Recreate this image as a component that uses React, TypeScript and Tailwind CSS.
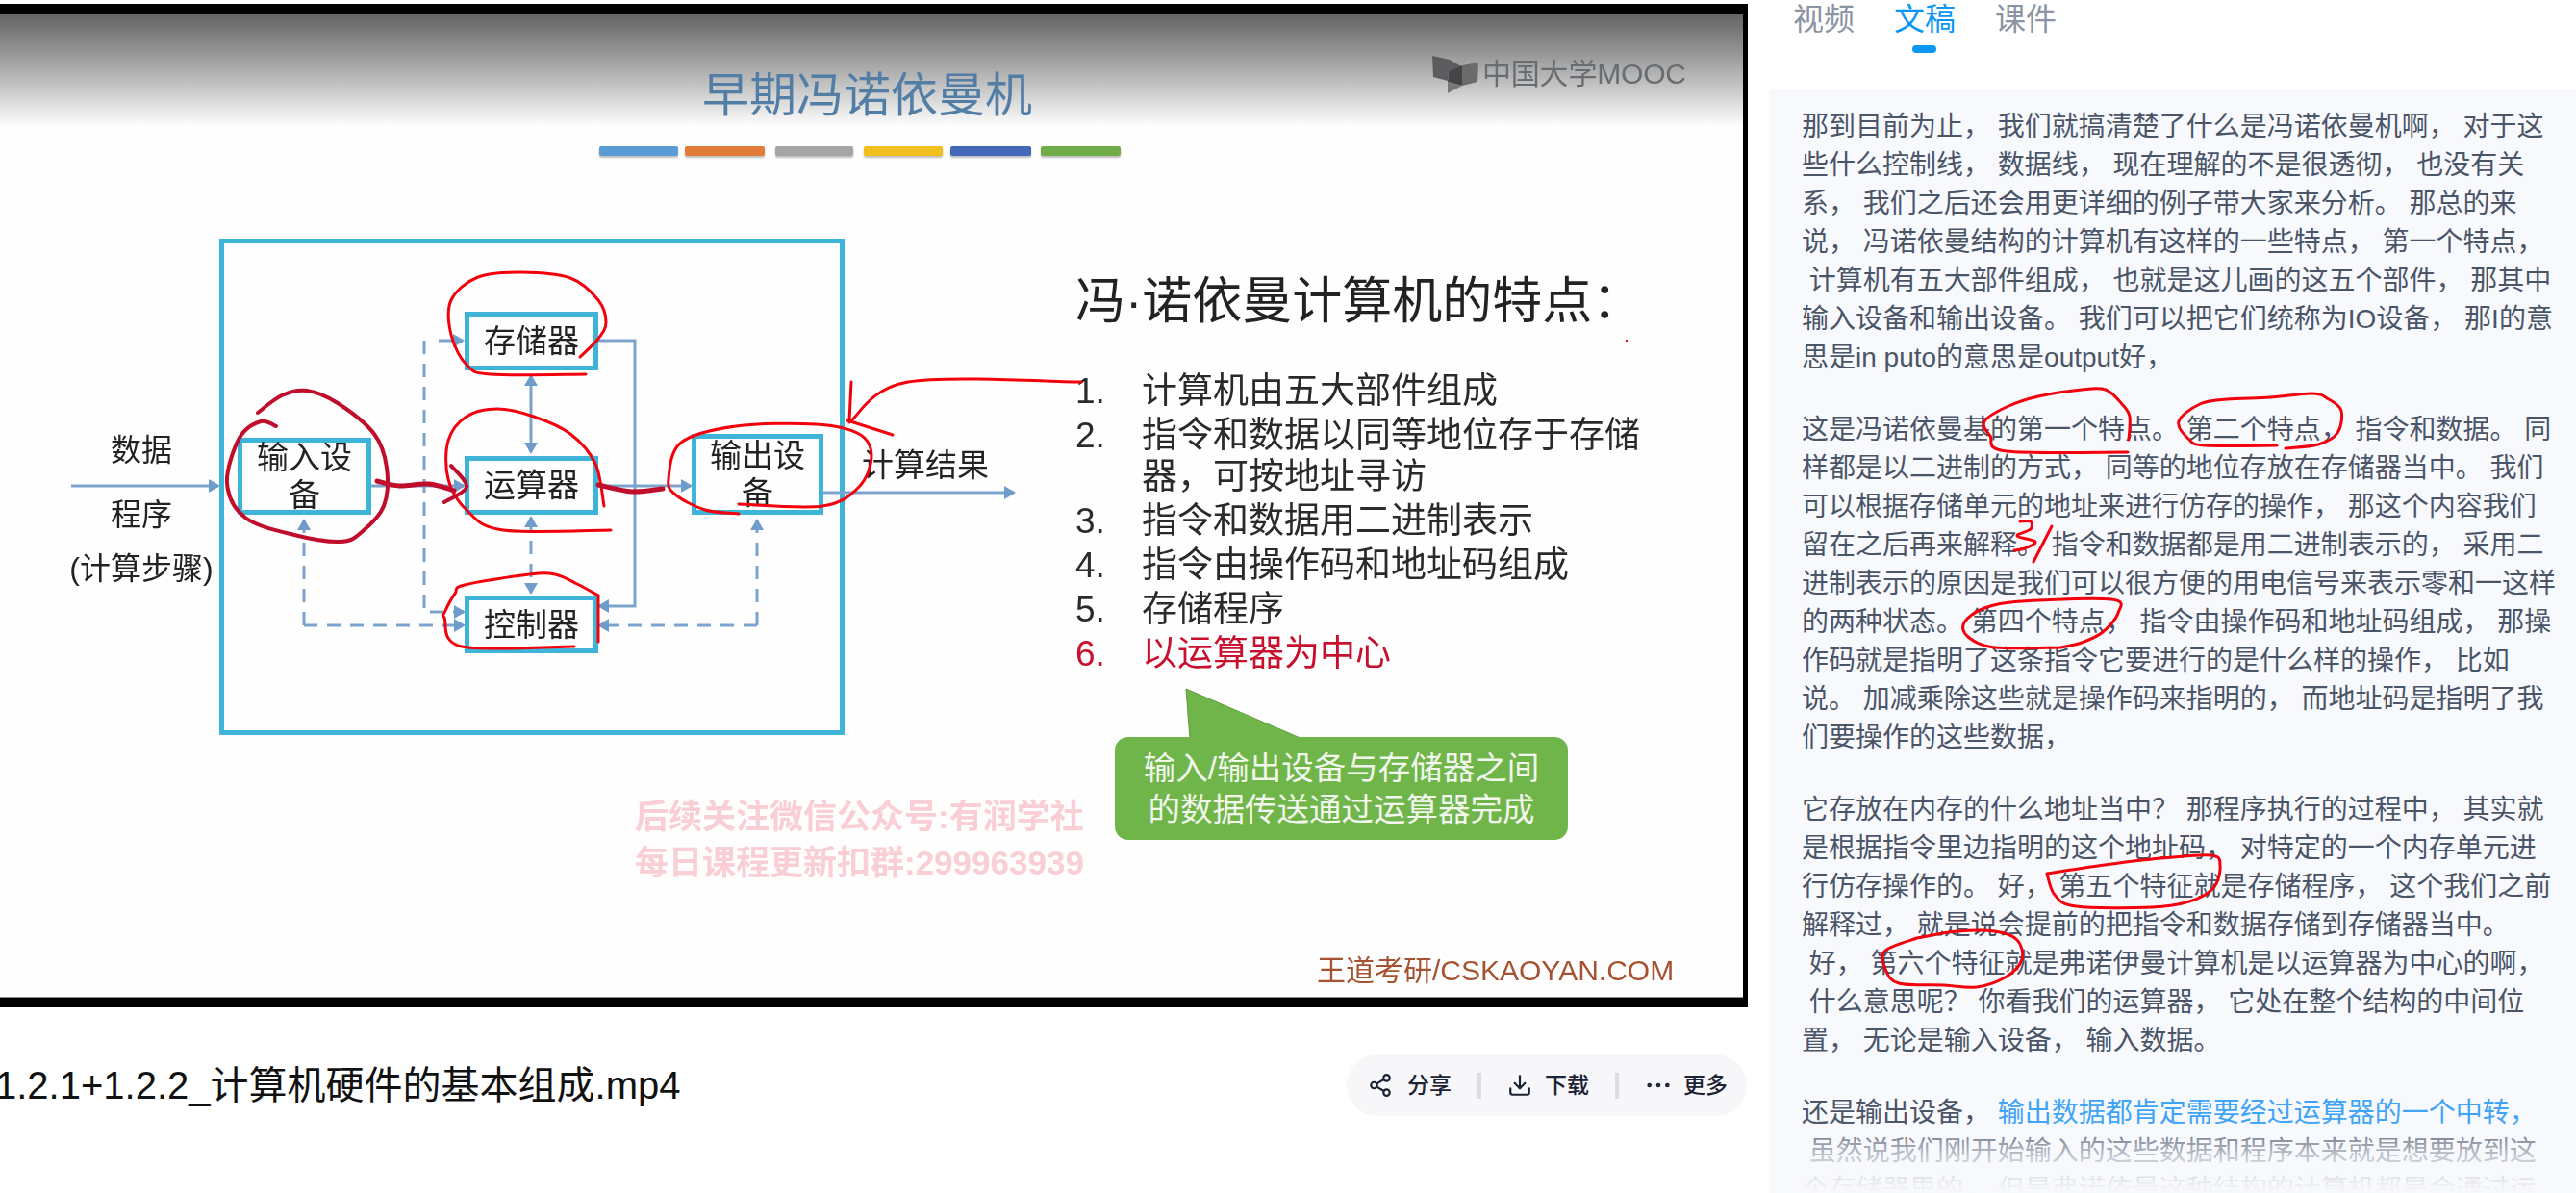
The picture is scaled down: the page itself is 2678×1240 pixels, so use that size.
import React from 'react';
import { Share2, Download, Ellipsis } from 'lucide-react';

const cjk = { fontFamily: '"Liberation Sans", "Noto Sans CJK SC", sans-serif' };

type Run = { text: string; className?: string };

const paragraphs: (string | Run[])[][] = [
  [
    '那到目前为止， 我们就搞清楚了什么是冯诺依曼机啊， 对于这',
    '些什么控制线， 数据线， 现在理解的不是很透彻， 也没有关',
    '系， 我们之后还会用更详细的例子带大家来分析。 那总的来',
    '说， 冯诺依曼结构的计算机有这样的一些特点， 第一个特点，',
    ' 计算机有五大部件组成， 也就是这儿画的这五个部件， 那其中',
    '输入设备和输出设备。 我们可以把它们统称为IO设备， 那I的意',
    '思是in puto的意思是output好，',
  ],
  [
    '这是冯诺依曼基的第一个特点。 第二个特点， 指令和数据。 同',
    '样都是以二进制的方式， 同等的地位存放在存储器当中。 我们',
    '可以根据存储单元的地址来进行仿存的操作， 那这个内容我们',
    '留在之后再来解释。 指令和数据都是用二进制表示的， 采用二',
    '进制表示的原因是我们可以很方便的用电信号来表示零和一这样',
    '的两种状态。 第四个特点， 指令由操作码和地址码组成， 那操',
    '作码就是指明了这条指令它要进行的是什么样的操作， 比如',
    '说。 加减乘除这些就是操作码来指明的， 而地址码是指明了我',
    '们要操作的这些数据，',
  ],
  [
    '它存放在内存的什么地址当中？ 那程序执行的过程中， 其实就',
    '是根据指令里边指明的这个地址码， 对特定的一个内存单元进',
    '行仿存操作的。 好， 第五个特征就是存储程序， 这个我们之前',
    '解释过， 就是说会提前的把指令和数据存储到存储器当中。',
    ' 好， 第六个特征就是弗诺伊曼计算机是以运算器为中心的啊，',
    ' 什么意思呢？ 你看我们的运算器， 它处在整个结构的中间位',
    '置， 无论是输入设备， 输入数据。',
  ],
  [
    [
      { text: '还是输出设备， ' },
      { text: '输出数据都肯定需要经过运算器的一个中转，', className: 'text-[#3fa4f7]' },
    ],
    ' 虽然说我们刚开始输入的这些数据和程序本来就是想要放到这',
    '个存储器里的， 但是弗诺依曼这种结构的计算机都是会通过运',
  ],
];

const listItems = [
  { n: '1.', lines: ['计算机由五大部件组成'] },
  { n: '2.', lines: ['指令和数据以同等地位存于存储', '器，可按地址寻访'] },
  { n: '3.', lines: ['指令和数据用二进制表示'] },
  { n: '4.', lines: ['指令由操作码和地址码组成'] },
  { n: '5.', lines: ['存储程序'] },
  { n: '6.', lines: ['以运算器为中心'], red: true },
];

const bars = [
  'w-[82px] bg-[#5b9bd5]',
  'ml-[7px] w-[83px] bg-[#e07b39]',
  'ml-[11px] w-[81px] bg-[#a5a5a5]',
  'ml-[11px] w-[82px] bg-[#f2c01e]',
  'ml-[8px] w-[84px] bg-[#4468b8]',
  'ml-[10px] w-[83px] bg-[#70ad47]',
];

// pen strokes over the picture, in page pixels
const bright = '#f4000c';
const dark = '#c10d2c';
const ink: { pts: number[][]; color: string; width: number }[] = [
  { color: bright, width: 3, pts: [[603, 371], [622, 352], [630, 335], [622, 312], [593, 289], [542, 283], [497, 288], [469, 312], [469, 348], [485, 379], [510, 389], [609, 389]] },
  { color: bright, width: 3, pts: [[628, 526], [619, 482], [593, 451], [555, 433], [517, 425], [485, 433], [466, 458], [466, 498], [485, 530], [523, 551], [635, 551]] },
  { color: bright, width: 3, pts: [[768, 534], [733, 530], [702, 514], [695, 498], [708, 460], [765, 443], [848, 441], [893, 451], [906, 474], [893, 506], [855, 526], [768, 524]] },
  { color: dark, width: 4, pts: [[268, 429], [293, 411], [319, 406], [351, 419], [389, 451], [402, 486], [399, 526], [376, 553], [354, 563], [306, 556], [255, 538], [236, 502], [249, 455], [271, 438], [287, 443]] },
  { color: dark, width: 5, pts: [[392, 500], [415, 505], [446, 503], [472, 510]] },
  { color: dark, width: 4, pts: [[469, 484], [485, 506], [462, 522]] },
  { color: dark, width: 5, pts: [[622, 504], [657, 511], [689, 508]] },
  { color: bright, width: 3, pts: [[1124, 397], [944, 397], [883, 439]] },
  { color: bright, width: 3, pts: [[885, 397], [883, 437]] },
  { color: bright, width: 3, pts: [[881, 437], [928, 452]] },
  { color: bright, width: 3, pts: [[622, 619], [600, 607], [577, 597], [550, 597], [483, 608], [473, 617], [462, 637], [462, 642], [480, 672], [597, 672]] },
  { color: bright, width: 3, pts: [[622, 619], [622, 667]] },
  { color: bright, width: 3, pts: [[2212, 470], [2086, 469], [2069, 453], [2063, 438], [2086, 423], [2119, 412], [2164, 405], [2189, 405], [2206, 420], [2214, 433], [2213, 457]] },
  { color: bright, width: 3, pts: [[2376, 466], [2410, 462], [2430, 450], [2434, 427], [2421, 415], [2404, 409], [2360, 413], [2315, 415], [2287, 420], [2265, 438], [2276, 457], [2293, 463], [2367, 463]] },
  { color: bright, width: 3, pts: [[2100, 542], [2111, 542], [2111, 550], [2097, 557], [2116, 563], [2105, 570], [2094, 572]] },
  { color: bright, width: 3, pts: [[2133, 547], [2114, 584]] },
  { color: bright, width: 3, pts: [[2142, 673], [2074, 673], [2046, 662], [2042, 647], [2063, 632], [2102, 625], [2195, 623], [2202, 637], [2186, 657], [2164, 668], [2142, 673]] },
  { color: bright, width: 3, pts: [[2128, 908], [2181, 900], [2237, 893], [2298, 889], [2308, 900], [2301, 923], [2276, 937], [2237, 943], [2158, 942], [2136, 930], [2128, 908]] },
  { color: bright, width: 3, pts: [[1993, 975], [2035, 968], [2074, 968], [2097, 977], [2102, 997], [2086, 1015], [2055, 1026], [2021, 1024], [1974, 1022], [1960, 1007], [1960, 988], [1993, 975]] },
];

const smooth = (pts: number[][]) => {
  let d = `M${pts[0][0]} ${pts[0][1]}`;
  for (let i = 0; i < pts.length - 1; i++) {
    const p0 = pts[i - 1] ?? pts[i];
    const p1 = pts[i];
    const p2 = pts[i + 1];
    const p3 = pts[i + 2] ?? p2;
    d += ` C${p1[0] + (p2[0] - p0[0]) / 6} ${p1[1] + (p2[1] - p0[1]) / 6} ${p2[0] - (p3[0] - p1[0]) / 6} ${p2[1] - (p3[1] - p1[1]) / 6} ${p2[0]} ${p2[1]}`;
  }
  return d;
};

const Unit: React.FC<{ className: string; children: React.ReactNode }> = ({ className, children }) => (
  <div className={`absolute flex items-center justify-center border-[5px] border-[#3fb4d9] text-center text-[33px] leading-[39px] text-[#222] ${className}`}>
    {children}
  </div>
);

const Wires = () => (
  <svg className="absolute left-0 top-0" width="1812" height="1040" fill="none" stroke="#7ba3cb" strokeWidth="3">
    <defs>
      <marker id="head" markerUnits="userSpaceOnUse" markerWidth="12" markerHeight="14" refX="10" refY="7" orient="auto-start-reverse">
        <path d="M0 0 L12 7 L0 14 Z" fill="#6f9ccb" stroke="none" />
      </marker>
    </defs>
    <path d="M74 505 H227" markerEnd="url(#head)" />
    <path d="M386 505 H482" markerEnd="url(#head)" />
    <path d="M622 505 H718" markerEnd="url(#head)" />
    <path d="M856 512 H1054" markerEnd="url(#head)" />
    <path d="M622 354 H660 V630 H623" markerEnd="url(#head)" />
    <path d="M552 391 V470" markerStart="url(#head)" markerEnd="url(#head)" />
    <path d="M456 354 H481" markerEnd="url(#head)" />
    <g strokeDasharray="14 10">
      <path d="M552 538 V616" markerStart="url(#head)" markerEnd="url(#head)" />
      <path d="M441 354 V636 H482" markerEnd="url(#head)" />
      <path d="M316 650 V541" markerEnd="url(#head)" />
      <path d="M316 650 H482" markerEnd="url(#head)" />
      <path d="M787 650 V541" markerEnd="url(#head)" />
      <path d="M787 650 H623" markerEnd="url(#head)" />
    </g>
  </svg>
);

const Slide = () => (
  <div className="relative h-[1022px] overflow-hidden border-b border-[#8a8a8a] bg-[#fefefe]">
    <div className="absolute inset-x-0 top-0 h-[116px] bg-gradient-to-b from-[#646464] to-[#fefefe]" />
  </div>
);

const SlideContent = () => (
  <div className="absolute left-0 top-0 h-[1037px] w-[1812px] overflow-hidden blur-[0.6px]">
    <div className="absolute left-[730px] top-[71px] text-[49px] leading-[56px] text-[#527ea6] whitespace-nowrap">早期冯诺依曼机</div>

    <div className="absolute left-[623px] top-[152px] flex">
      {bars.map((c) => (
        <div key={c} className={`h-[10px] rounded-[2px] shadow-[0_2px_2px_rgba(0,0,0,0.25)] ${c}`} />
      ))}
    </div>

    <svg className="absolute left-[1480px] top-[50px]" width="60" height="50" viewBox="1480 50 60 50">
      <path d="M1489 58 L1507 62 L1519 69 L1506 74 L1505 84 L1490 80 Z" fill="#5c5c60" />
      <path d="M1506 74 L1520 68 L1520 89 L1505 85 Z" fill="#454548" />
      <path d="M1520 68 L1537 65 L1536 85 L1520 89 Z" fill="#6b6b6b" />
      <path d="M1505 85 L1520 89 L1505 97 Z" fill="#777" />
    </svg>
    <div className="absolute left-[1541px] top-[60px] text-[30px] leading-[34px] tracking-[-0.2px] text-[#686d72] whitespace-nowrap">中国大学MOOC</div>

    <div className="absolute left-[228px] top-[248px] h-[516px] w-[650px] border-[5px] border-[#3fb4d9]" />
    <Wires />
    <Unit className="left-[483px] top-[324px] h-[61px] w-[139px]">存储器</Unit>
    <Unit className="left-[483px] top-[474px] h-[61px] w-[139px]">运算器</Unit>
    <Unit className="left-[483px] top-[619px] h-[60px] w-[139px]">控制器</Unit>
    <Unit className="left-[247px] top-[455px] h-[80px] w-[139px]">输入设<br />备</Unit>
    <Unit className="left-[719px] top-[451px] h-[84px] w-[137px]">输出设<br />备</Unit>

    <div className="absolute left-[69px] top-[448px] flex w-[156px] flex-col items-center text-[32px] leading-[40px] text-[#222]">
      <span>数据</span>
      <span className="mt-[27px]">程序</span>
      <span className="mt-[16px] whitespace-nowrap">(计算步骤)</span>
    </div>
    <div className="absolute left-[896px] top-[464px] text-[33px] leading-[40px] text-[#222] whitespace-nowrap">计算结果</div>

    <div className="absolute left-[1118px] top-[284px] text-[52px] leading-[58px] text-[#222] whitespace-nowrap">冯·诺依曼计算机的特点：</div>

    <div className="absolute left-[1118px] top-[385px] flex flex-col gap-[3px] text-[37px] leading-[43px] text-[#2a2a2a]">
      {listItems.map((item) => (
        <div key={item.n} className={`flex ${item.red ? 'text-[#c8102e]' : ''}`}>
          <span className="w-[69px]">{item.n}</span>
          <div>
            {item.lines.map((l) => (
              <div key={l} className="whitespace-nowrap">{l}</div>
            ))}
          </div>
        </div>
      ))}
    </div>

    <svg className="absolute left-[1225px] top-[710px]" width="140" height="60">
      <path d="M8 6 L12 58 L129 58 Z" fill="#70b54a" stroke="#5f9a3f" strokeWidth="1" />
    </svg>
    <div className="absolute left-[1159px] top-[766px] flex h-[107px] w-[471px] items-center justify-center rounded-[14px] bg-[#70b54a] text-center text-[33.5px] leading-[43px] text-[#f1f7ec]">
      输入/输出设备与存储器之间<br />的数据传送通过运算器完成
    </div>

    <div className="absolute left-[660px] top-[825px] text-[35px] font-bold leading-[48px] text-[#f9cfd5] whitespace-nowrap">
      后续关注微信公众号:有润学社<br />每日课程更新扣群:299963939
    </div>

    <div className="absolute left-[1369px] top-[992px] text-[30px] leading-[34px] text-[#a4522f] whitespace-nowrap">王道考研/CSKAOYAN.COM</div>
  </div>
);

const App: React.FC = () => (
  <div className="relative flex h-[1240px] w-[2678px] overflow-hidden bg-white" style={cjk}>
    <div className="w-[1816px] shrink-0">
      <div className="relative h-[1047px] w-[1817px] bg-black pr-[5px] pt-[15px]">
        <div className="absolute inset-x-0 top-0 h-[4px] bg-white" />
        <Slide />
        <SlideContent />
      </div>

      <div className="mt-[49px] flex h-[64px] items-center justify-between">
        <h1 className="-ml-[5px] whitespace-nowrap text-[40px] font-normal leading-[48px] text-[#111]">1.2.1+1.2.2_计算机硬件的基本组成.mp4</h1>
        <div className="flex h-[64px] w-[416px] items-center gap-[27px] rounded-full bg-[#f7f7f9] pl-[22px] text-[23px] font-medium text-[#1a2233]">
          <button className="flex items-center gap-[15px]">
            <Share2 className="h-[26px] w-[26px]" strokeWidth={2} />
            分享
          </button>
          <span className="h-[27px] w-[4px] bg-[#dadce6]" />
          <button className="flex items-center gap-[13px]">
            <Download className="h-[26px] w-[26px]" strokeWidth={2} />
            下载
          </button>
          <span className="h-[27px] w-[4px] bg-[#dadce6]" />
          <button className="-ml-[2px] flex items-center gap-[10px]">
            <Ellipsis className="h-[32px] w-[32px]" strokeWidth={1.5} />
            更多
          </button>
        </div>
      </div>
    </div>

    <div className="ml-[23px] flex w-[839px] flex-col">
      <div className="flex h-[92px] gap-[41px] pl-[25px] text-[32px] leading-[40px] text-[#8b94a3]">
        <span>视频</span>
        <span className="relative text-[#0a96f5]">
          文稿
          <span className="absolute left-[19px] top-[47px] h-[8px] w-[25px] rounded-full bg-[#0a96f5]" />
        </span>
        <span>课件</span>
      </div>

      <div className="relative flex-1 overflow-hidden bg-[#f8f9fd] pl-[34px] pt-[20px] text-[28px] leading-[40px] text-[#4a5568]">
        {paragraphs.map((lines, i) => (
          <div key={i} className="mb-[35px]">
            {lines.map((line, j) => (
              <div key={j} className="whitespace-pre">
                {typeof line === 'string'
                  ? line
                  : line.map((r) => (
                      <span key={r.text} className={r.className}>{r.text}</span>
                    ))}
              </div>
            ))}
          </div>
        ))}
        <div className="absolute inset-x-0 bottom-0 h-[75px] bg-gradient-to-b from-[#f8f9fd]/0 via-[#f8f9fd]/70 to-[#f8f9fd]" />
      </div>
    </div>

    <svg className="pointer-events-none absolute left-0 top-0" width="2678" height="1240" fill="none" strokeLinecap="round" strokeLinejoin="round">
      {ink.map((s, i) => (
        <path key={i} d={smooth(s.pts)} stroke={s.color} strokeWidth={s.width} />
      ))}
      <rect x="1690" y="353" width="2" height="2" fill={bright} />
    </svg>
  </div>
);

export default App;
